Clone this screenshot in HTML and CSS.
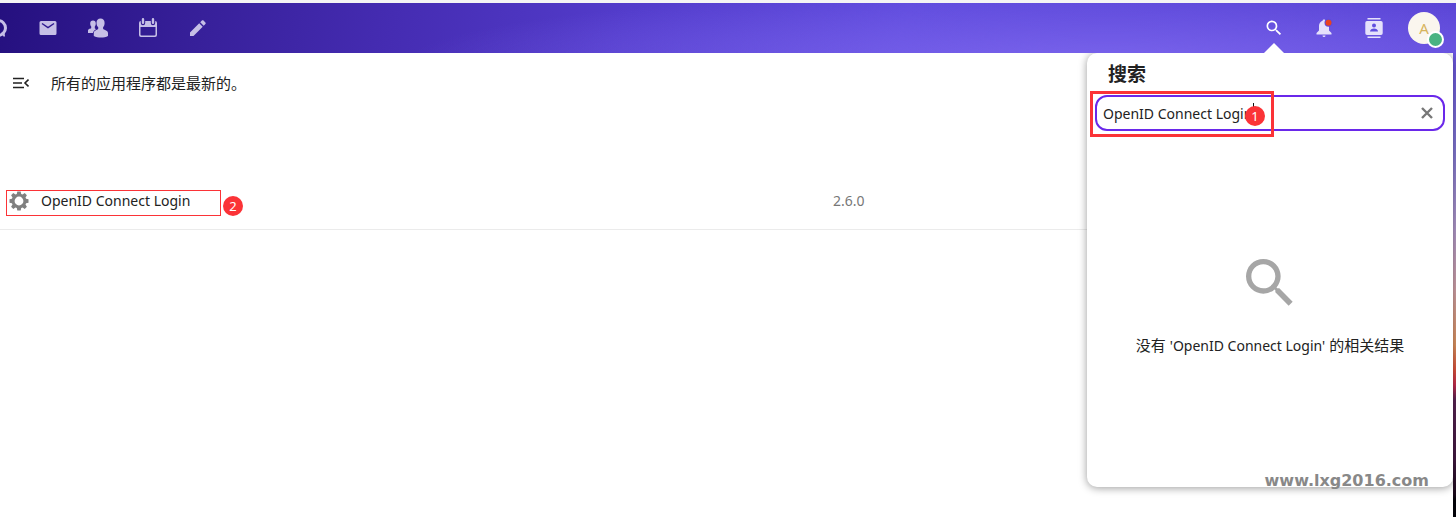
FILE: index.html
```html
<!DOCTYPE html>
<html lang="zh-CN">
<head>
    <meta charset="UTF-8">
    <meta name="viewport" content="width=device-width, initial-scale=1.0">
    <title>应用</title>
    <link rel="stylesheet" href="styles.css">
</head>
<body>
<header class="header">
    <nav class="app-menu">
        <a href="#" class="app-link" aria-label="Talk">
            <svg width="22" height="22" viewBox="0 0 22 22"><circle cx="11" cy="11" r="7.500" fill="none" stroke="currentColor" stroke-width="3"/><path d="M14 16l3-2 1 5-1 1z" fill="currentColor"/></svg>
        </a>
        <a href="#" class="app-link" aria-label="邮件">
            <svg width="20" height="20" viewBox="0 0 20 20"><path fill="currentColor" d="M3 3h14a1.500 1.500 0 0 1 1.500 1.500v11A1.500 1.500 0 0 1 17 17H3a1.500 1.500 0 0 1-1.500-1.500v-11A1.500 1.500 0 0 1 3 3z"/><path d="M4 5.500l6 4 6-4" fill="none" stroke="#2f1a90" stroke-width="1.500"/></svg>
        </a>
        <a href="#" class="app-link" aria-label="联系人">
            <svg width="20" height="20" viewBox="0 0 20 20"><g fill="currentColor"><path d="M12.500.5c2.600 0 4.100 1.800 4.100 4.400 0 1.800-.6 3.300-1.500 4.200v1.600c0 .9 4.900 1.500 4.900 4.300v3c-1.800 1.300-4.500 1.500-7 1.500s-5.300-.3-7.200-1.500v-3c0-2.800 4.400-3.400 4.400-4.300V9.100c-1-.9-1.700-2.400-1.700-4.200 0-2.600 1.500-4.400 4-4.400z"/><path d="M5 2.500c1.900 0 2.800 1.300 2.800 3 0 1.200-.4 2.300-1 3v1.500c0 .8 1 .9 1.400 1.300-1.500.7-2.900 1.900-3.300 3.700H0v-2.500c0-2 3.200-1.800 3.200-2.600V8.500c-.6-.6-1-1.700-1-3 0-1.700.9-3 2.800-3z"/></g></svg>
        </a>
        <a href="#" class="app-link" aria-label="日历">
            <svg width="20" height="20" viewBox="0 0 20 20"><path fill="currentColor" fill-rule="evenodd" d="M3.800 1.200a1.200 1.200 0 0 1 2.400 0v3.500a1.200 1.200 0 0 1-2.400 0zM13.800 1.200a1.200 1.200 0 0 1 2.400 0v3.500a1.200 1.200 0 0 1-2.400 0zM2.800 3v2a2.200 2.200 0 0 0 4.400 0V3h5.600v2a2.200 2.200 0 0 0 4.400 0V3A2 2 0 0 1 19 5v12a2 2 0 0 1-2 2H3a2 2 0 0 1-2-2V5a2 2 0 0 1 1.800-2zM2.500 9v7.500a1 1 0 0 0 1 1h13a1 1 0 0 0 1-1V9z"/></svg>
        </a>
        <a href="#" class="app-link" aria-label="笔记">
            <svg width="20" height="20" viewBox="0 0 20 20"><path fill="currentColor" d="M2 14.500V18h3.500l9.200-9.200-3.500-3.500zM12.200 4.300l3.500 3.500 1.700-1.700c.5-.5.500-1.100 0-1.600L15.500 2.600c-.5-.5-1.100-.5-1.600 0z"/></svg>
        </a>
    </nav>
    <div class="header-right">
        <button class="header-btn active" aria-label="搜索">
            <svg width="20" height="20" viewBox="0 0 24 24"><path fill="currentColor" d="M9.500 3A6.500 6.500 0 0 1 16 9.500c0 1.610-.59 3.090-1.560 4.230l.27.270h.79l5 5-1.500 1.500-5-5v-.79l-.27-.27A6.516 6.516 0 0 1 9.500 16 6.500 6.500 0 0 1 3 9.500 6.500 6.500 0 0 1 9.500 3m0 2C7 5 5 7 5 9.500S7 14 9.500 14 14 12 14 9.500 12 5 9.500 5z"/></svg>
        </button>
        <button class="header-btn" aria-label="通知">
            <svg width="20" height="20" viewBox="0 0 20 20"><path fill="currentColor" d="M10 1.500c.8 0 1.400.4 1.400 1.200 2.200.8 3.600 2.800 3.600 5.300v4.500l2.500 2.500v1.500h-15V15L5 12.500V8c0-2.500 1.400-4.500 3.600-5.300 0-.8.600-1.200 1.400-1.200zM8.500 17.500h3a1.500 1.500 0 0 1-3 0z"/><circle cx="14.500" cy="4.800" r="4" fill="#5d4bdc"/><circle cx="14.500" cy="4.800" r="3" fill="#e9421e"/></svg>
        </button>
        <button class="header-btn" aria-label="联系人">
            <svg width="20" height="20" viewBox="0 0 20 20"><path fill="currentColor" fill-rule="evenodd" d="M3.500 0h13v1.500h-13zM3.500 18.500h13V20h-13zM3 3h14a1.700 1.700 0 0 1 1.700 1.700v10.600A1.700 1.700 0 0 1 17 17H3a1.700 1.700 0 0 1-1.700-1.700V4.700A1.700 1.700 0 0 1 3 3z"/><circle cx="10" cy="7.500" r="2" fill="#5f4edf"/><path d="M6 13.500c0-4 8-4 8 0z" fill="#5f4edf"/></svg>
        </button>
        <button class="header-btn" aria-label="用户">
            <span class="avatar">A<span class="status"></span></span>
        </button>
    </div>
</header>

<main class="content">
    <div class="toolbar">
        <button class="toggle-btn" aria-label="导航">
            <svg width="16" height="12" viewBox="0 0 16 12"><path d="M0 1.500h11M0 6h9M0 10.500h11M15.500 2.500L12 6l3.500 3.500" fill="none" stroke="currentColor" stroke-width="1.600"/></svg>
        </button>
        <span>所有的应用程序都是最新的。</span>
    </div>
    <table class="apps">
        <tr>
            <td class="app-name">
                <div class="app-cell">
                    <svg width="20" height="20" viewBox="0 0 20 20"><path fill="currentColor" fill-rule="evenodd" d="M8.300.5h3.400l.5 2.400 1.400.6 2.100-1.400 2.200 2.200-1.400 2.100.6 1.400 2.400.5v3.400l-2.400.5-.6 1.400 1.400 2.100-2.200 2.200-2.100-1.400-1.400.6-.5 2.400H8.300l-.5-2.400-1.400-.6-2.100 1.400-2.200-2.200 1.400-2.100-.6-1.400-2.400-.5V8.300l2.400-.5.6-1.400-1.400-2.100 2.200-2.200 2.100 1.400 1.400-.6zM10 5.600a4.400 4.400 0 1 0 0 8.800 4.400 4.400 0 0 0 0-8.800z"/></svg>
                    <span>OpenID Connect Login</span>
                    <span class="mark mark-app"><span class="mark-num">2</span></span>
                </div>
            </td>
            <td class="app-version">2.6.0</td>
        </tr>
    </table>
</main>

<section class="search-panel">
    <h2><label for="search">搜索</label></h2>
    <div class="search-box">
        <input type="text" id="search" value="OpenID Connect Login">
        <button class="clear-btn" aria-label="清除">
            <svg width="12" height="12" viewBox="0 0 12 12"><path d="M1 1l10 10M11 1L1 11" stroke="currentColor" stroke-width="2.400"/></svg>
        </button>
        <span class="caret"></span>
        <span class="mark mark-search"><span class="mark-num">1</span></span>
    </div>
    <div class="empty">
        <svg width="64" height="64" viewBox="0 0 24 24"><path fill="currentColor" d="M9.500 3A6.500 6.500 0 0 1 16 9.500c0 1.610-.59 3.090-1.560 4.230l.27.270h.79l5 5-1.500 1.500-5-5v-.79l-.27-.27A6.516 6.516 0 0 1 9.500 16 6.500 6.500 0 0 1 3 9.500 6.500 6.500 0 0 1 9.500 3m0 2C7 5 5 7 5 9.500S7 14 9.500 14 14 12 14 9.500 12 5 9.500 5z"/></svg>
        <p>没有 <span class="query">'OpenID Connect Login'</span> 的相关结果</p>
    </div>
</section>
<div class="watermark">www.lxg2016.com</div>
</body>
</html>
```

FILE: styles.css
```css
* {
    box-sizing: border-box;
}

body {
    margin: 0;
    min-height: 100vh;
    display: flex;
    flex-direction: column;
    position: relative;
    font-family: "Noto Sans", "Noto Sans CJK SC", sans-serif;
    font-size: 15px;
    line-height: 20px;
    color: #222;
    background: linear-gradient(#6a55e0 53px, #8378d4 150px, #b29acb 230px, #d2a2a8 290px, #df9460 345px, #e0533c 370px, #c92c50 385px, #5a2455 400px, #421842 460px, #170818 495px, #020208 500px);
}

button {
    padding: 0;
    border: none;
    background: none;
    color: inherit;
    font: inherit;
    cursor: pointer;
}

svg {
    display: block;
    flex: none;
}

.header {
    height: 53px;
    border-top: 3px solid #bbb;
    border-image: linear-gradient(#f4f4f4 66%, #aaa 67%) 3;
    display: flex;
    justify-content: space-between;
    background: radial-gradient(ellipse 700px 75px at 76% 120%, #7a64ec, #7a64ec00), linear-gradient(100deg, #25107f, #37209a 14%, #452cb2 27%, #533ccb 43%, #5d49dc 62%, #5843d4);
}

.app-menu {
    display: flex;
    margin-left: -27px;
    color: #c6bfe6;
}

.app-link {
    width: 50px;
    display: flex;
    align-items: center;
    justify-content: center;
    color: inherit;
}

.header-right {
    display: flex;
    margin-right: 7px;
    color: #e5e1fb;
}

.header-btn {
    width: 50px;
    display: flex;
    align-items: center;
    justify-content: center;
    position: relative;
}

.header-btn.active {
    color: #fff;
}

.header-btn.active::after {
    content: "";
    position: absolute;
    bottom: 0;
    border: 10px solid transparent;
    border-top: none;
    border-bottom-color: #fff;
}

.avatar {
    position: relative;
    width: 32px;
    height: 32px;
    border-radius: 50%;
    background: #faf6ee;
    color: #d7b45c;
    line-height: 32px;
}

.status {
    position: absolute;
    right: -4px;
    bottom: -4px;
    width: 17px;
    height: 17px;
    border: 2px solid #fff;
    border-radius: 50%;
    background: #49b382;
}

.content {
    flex: 1;
    margin-right: 3px;
    background: #fff;
}

.toolbar {
    display: flex;
    align-items: center;
    height: 60px;
    padding-left: 13px;
    gap: 22px;
}

.apps {
    width: 100%;
    margin-top: 60px;
    border-collapse: collapse;
    table-layout: fixed;
    font-size: 14px;
}

.apps td {
    height: 56px;
    padding: 0;
    border-bottom: 1px solid #ebebeb;
}

.app-name {
    width: 833px;
}

.app-cell {
    display: flex;
    align-items: center;
    position: relative;
    padding-left: 9px;
    gap: 12px;
}

.app-cell svg {
    color: #808080;
}

.app-version {
    color: #777;
}

.search-panel {
    position: absolute;
    top: 53px;
    right: 3px;
    width: 366px;
    height: 434px;
    padding: 8px;
    border-radius: 10px;
    background: #fff;
    box-shadow: 0 1px 8px rgba(0, 0, 0, 0.4);
    clip-path: inset(0 -3px -20px -20px);
}

.search-panel h2 {
    margin: 0 13px 7px;
    font-size: 19px;
    line-height: 27px;
}

.search-box {
    position: relative;
    display: flex;
}

.search-box input {
    width: 100%;
    height: 36px;
    padding: 0 36px 0 6px;
    border: 2px solid #6a28ea;
    border-radius: 12px;
    font: inherit;
    font-size: 14px;
    color: #222;
    outline: none;
}

.clear-btn {
    position: absolute;
    top: 12px;
    right: 12px;
    color: #777;
}

.caret {
    position: absolute;
    top: 8px;
    left: 158px;
    width: 1px;
    height: 18px;
    background: #111;
}

.mark {
    position: absolute;
    border: 1px solid #fb3337;
}

.mark-app {
    top: -1px;
    left: 6px;
    width: 215px;
    height: 26px;
}

.mark-search {
    top: -4px;
    left: -5px;
    width: 184px;
    height: 46px;
    border-width: 3px;
}

.mark-num {
    position: absolute;
    width: 20px;
    height: 20px;
    border-radius: 50%;
    background: #fb3337;
    color: #fff;
    font-size: 13px;
    text-align: center;
}

.mark-app .mark-num {
    top: 5px;
    right: -23px;
}

.mark-search .mark-num {
    top: 12px;
    right: 6px;
}

.empty {
    display: flex;
    flex-direction: column;
    align-items: center;
    margin-top: 120px;
}

.empty svg {
    color: #a6a6a6;
}

.empty p {
    margin: 20px 0 0;
}

.query {
    font-size: 14px;
}

.watermark {
    position: absolute;
    right: 27px;
    bottom: 26px;
    font-family: "DejaVu Sans", sans-serif;
    font-size: 16px;
    font-weight: bold;
    color: #888;
}
```
